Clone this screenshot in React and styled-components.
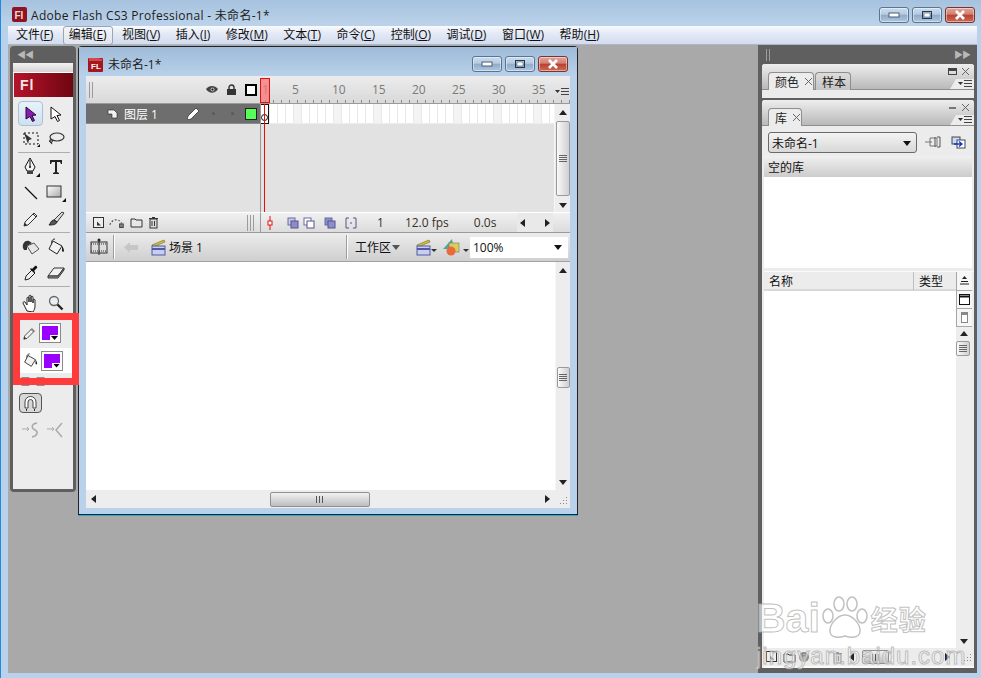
import React from "react";
import styled, { createGlobalStyle } from "styled-components";

const GlobalStyle = createGlobalStyle`
  html, body {
    margin: 0;
    padding: 0;
    width: 981px;
    height: 678px;
    overflow: hidden;
    background: #b9d1ea;
  }
  * { box-sizing: border-box; }
`;

const UI = `"Open Sans", "Noto Sans CJK SC", sans-serif`;

const AppFrame = styled.div`
  width: 981px;
  height: 678px;
  display: flex;
  flex-direction: column;
  background: #b9d1ea;
  border-left: 1px solid #1f8ae6;
  font-family: ${UI};
  font-size: 12px;
  color: #111;
  overflow: hidden;
`;

const TitleBar = styled.div`
  height: 26px;
  flex: none;
  display: flex;
  align-items: center;
  padding: 3px 6px 0 11px;
  background: linear-gradient(#a6c2de, #bcd3ea);
`;

const TitleText = styled.span`
  margin-left: 4px;
  font-size: 12px;
  letter-spacing: 0.3px;
  color: #1c1c1c;
  white-space: nowrap;
`;

const WinButtons = styled.div`
  margin-left: auto;
  display: flex;
  gap: 3px;
`;

const WinButton = styled.div`
  width: 30px;
  height: 16px;
  border: 1px solid ${(p) => (p.$close ? "#7c342a" : "#5a7590")};
  border-radius: 3px;
  display: flex;
  align-items: center;
  justify-content: center;
  box-shadow: inset 0 0 0 1px rgba(255, 255, 255, 0.45);
  background: ${(p) =>
    p.$close
      ? "linear-gradient(#e2a49b 0%, #d27f72 45%, #b8412f 50%, #cf6a58 100%)"
      : "linear-gradient(#ccdcee 0%, #b5cbe2 45%, #8eabca 50%, #afc7e0 100%)"};
`;

const MenuBar = styled.div`
  height: 19px;
  flex: none;
  display: flex;
  align-items: center;
  gap: 3.5px;
  margin: 0 4px 0 7px;
  padding-left: 2px;
  background: linear-gradient(#f8fafd 0%, #e4eaf6 40%, #d3dcee 100%);
  border-bottom: 1px solid #a9b7c9;
`;

const MenuItem = styled.div`
  height: 19px;
  line-height: 16px;
  padding: 0 5px;
  white-space: nowrap;
  font-size: 12px;
  border: 1px solid ${(p) => (p.$active ? "#9aa6b4" : "transparent")};
  border-radius: 3px;
  background: ${(p) => (p.$active ? "linear-gradient(#f4f6fa, #dfe4ee)" : "none")};

  u {
    text-underline-offset: 1px;
  }
`;

const Workspace = styled.div`
  flex: 1;
  min-height: 0;
  margin: 0 4px 5px 7px;
  padding: 1px 0 0 2px;
  background: #a9a9a9;
  display: flex;
  align-items: flex-start;
`;

/* tools */

const ToolPanel = styled.div`
  position: relative;
  width: 66px;
  height: 446px;
  flex: none;
  padding: 0 3px 3px;
  background: #5f5f5f;
  border-radius: 4px;
  display: flex;
  flex-direction: column;
`;

const PanelStrip = styled.div`
  height: ${(p) => p.$h || 17}px;
  flex: none;
  display: flex;
  align-items: center;
  justify-content: ${(p) => p.$justify || "flex-start"};
  color: #b8b8b8;
  font-size: 9px;
  letter-spacing: -1px;
  padding: 0 4px;
`;

const ToolBody = styled.div`
  flex: 1;
  background: #ececec;
  display: flex;
  flex-direction: column;
`;

const ToolHead = styled.div`
  height: 10px;
  flex: none;
  background: linear-gradient(#f2f2f2, #d4d4d4);
  border-bottom: 1px solid #fff;
`;

const FlBand = styled.div`
  height: 24px;
  flex: none;
  margin-left: 1px;
  padding-left: 6px;
  display: flex;
  align-items: center;
  color: #f4e3e3;
  font: bold 14px "Liberation Sans", sans-serif;
  letter-spacing: 1px;
  background: linear-gradient(90deg, #b5142b, #6f0610);
`;

const ToolRow = styled.div`
  height: ${(p) => p.$h || 26}px;
  margin-top: ${(p) => p.$top || 0}px;
  flex: none;
  display: grid;
  grid-template-columns: 25px 25px;
  padding-left: 5px;
`;

const ToolCell = styled.div`
  display: flex;
  align-items: center;
  justify-content: center;
  border-radius: 4px;
  ${(p) =>
    p.$active &&
    `
    border: 1px solid #a9c1d6;
    background: linear-gradient(#e9f2fa, #cfe0ef);
  `}
`;

const ToolDivider = styled.div`
  height: 1px;
  flex: none;
  margin: 0 3px 0 5px;
  background: #aeaeae;
`;

const ColorRow = styled.div`
  height: ${(p) => p.$h}px;
  margin-top: ${(p) => p.$top || 0}px;
  flex: none;
  display: flex;
  align-items: center;
  padding-left: 10px;
  gap: 4px;
  background: ${(p) => (p.$white ? "#fff" : "transparent")};
`;

const Swatch = styled.div`
  position: relative;
  width: 20px;
  height: 18px;
  background: #9900ff;
  border: 2px solid #fff;
  outline: 1px solid #8a8a8a;

  &::before {
    content: "";
    position: absolute;
    right: -1px;
    bottom: -1px;
    width: 9px;
    height: 6px;
    background: #fff;
  }

  &::after {
    content: "";
    position: absolute;
    right: 0;
    bottom: 0;
    width: 7px;
    height: 4px;
    background: #000;
    clip-path: polygon(0 0, 100% 0, 50% 100%);
  }
`;

const MagnetBox = styled.div`
  width: 23px;
  height: 20px;
  border: 1px solid #555;
  border-radius: 4px;
  background: #d8d8d8;
  display: flex;
  align-items: center;
  justify-content: center;
`;

const Highlight = styled.div`
  position: absolute;
  left: 3px;
  top: 267px;
  width: 66px;
  height: 72px;
  border: 7px solid #ff3b3b;
  z-index: 5;
`;

/* document window */

const DocWindow = styled.div`
  width: 500px;
  height: 469px;
  flex: none;
  margin-left: 2px;
  padding: 0 7px 6px;
  background: #b9d1ea;
  border: 1px solid #222;
  border-bottom-color: #0a2a3a;
  border-radius: 4px 4px 0 0;
  box-shadow: 0 1px 0 #27a7c9;
  display: flex;
  flex-direction: column;
`;

const DocTitle = styled.div`
  height: 29px;
  flex: none;
  display: flex;
  align-items: center;
  margin: 0 -7px;
  padding: 5px 9px 0 9px;
  background: linear-gradient(#9fbbd8, #b9d1ea);
  font-size: 12px;
  color: #1c1c1c;
`;

const DocTitleText = styled.span`
  margin-left: 4px;
`;

const Timeline = styled.div`
  height: 156px;
  flex: none;
  display: grid;
  grid-template-columns: 175px 1fr 16px;
  grid-template-rows: 28px 108px 20px;
  background: #e2e2e2;
`;

const RulerHead = styled.div`
  display: flex;
  align-items: center;
  padding: 0 4px 0 3px;
  background: linear-gradient(#ececec, #d9d9d9);
  border-bottom: 1px solid #9a9a9a;
`;

const Grip = styled.div`
  width: ${(p) => p.$w || 4}px;
  height: ${(p) => p.$h || 16}px;
  flex: none;
  margin-left: ${(p) => p.$left || 0}px;
  background: repeating-linear-gradient(90deg, #9c9c9c 0 1px, transparent 1px 3px);
`;

const HeadIcons = styled.div`
  margin-left: auto;
  display: flex;
  align-items: center;
  gap: 7px;
`;

const OutlineBox = styled.div`
  width: 12px;
  height: 12px;
  border: 2px solid #000;
  background: #fff;
  margin-left: 1px;
`;

const Ruler = styled.div`
  position: relative;
  grid-column: 2 / 4;
  display: flex;
  align-items: flex-start;
  padding: 5px 0 0 1px;
  color: #7a7a7a;
  font-size: 12px;
  line-height: 18px;
  border-bottom: 1px solid #9a9a9a;
  background:
    repeating-linear-gradient(90deg, #8e8e8e 0 1px, transparent 1px 8px) 4px 100% / 100% 3px no-repeat,
    linear-gradient(#ececec, #d9d9d9);
`;

const RulerNum = styled.span`
  flex: none;
  width: ${(p) => p.$w || 40}px;
`;

const PlayHead = styled.div`
  position: absolute;
  left: -1px;
  top: 2px;
  width: 10px;
  height: 25px;
  background: rgba(255, 110, 110, 0.7);
  border: 1px solid #e01010;
  z-index: 2;
`;

const RulerMenu = styled.div`
  position: absolute;
  right: 1px;
  top: 7px;
`;

const LayerColumn = styled.div`
  border-right: 1px solid #9a9a9a;
`;

const LayerRow = styled.div`
  height: 20px;
  display: flex;
  align-items: center;
  padding: 0 3px 0 21px;
  background: #6e6e6e;
  color: #fff;
  font-size: 12px;
  border-bottom: 1px solid #8c8c8c;
`;

const LayerName = styled.span`
  margin-left: 6px;
  width: 63px;
  flex: none;
`;

const LayerDot = styled.span`
  width: 3px;
  height: 3px;
  flex: none;
  border-radius: 50%;
  background: #5a5a5a;
  margin-left: ${(p) => p.$left}px;
`;

const LayerColor = styled.span`
  width: 12px;
  height: 12px;
  flex: none;
  margin-left: auto;
  background: #55ff55;
  border: 1px solid #222;
`;

const FrameColumn = styled.div`
  position: relative;
`;

const FrameRow = styled.div`
  position: relative;
  height: 20px;
  background:
    repeating-linear-gradient(90deg, #e8e8e8 0 1px, transparent 1px 8px),
    repeating-linear-gradient(90deg, transparent 0 32px, #f4f4f4 32px 40px),
    #fff;
  border-bottom: 1px solid #ececec;
`;

const KeyFrame = styled.div`
  position: absolute;
  left: 0;
  top: 0;
  width: 8px;
  height: 20px;
  border: 1px solid #111;
  border-left: 0;
  background: #fff;

  &::after {
    content: "";
    position: absolute;
    left: 0;
    bottom: 2px;
    width: 5px;
    height: 5px;
    border: 1px solid #111;
    border-radius: 50%;
  }
`;

const PlayLine = styled.div`
  position: absolute;
  left: 3px;
  top: 0;
  width: 1px;
  height: 108px;
  background: #e01010;
  z-index: 1;
`;

const VScroll = styled.div`
  width: ${(p) => p.$w || 16}px;
  display: flex;
  flex-direction: column;
  align-items: center;
  background: #ededed;
  border-left: 1px solid #f6f6f6;
`;

const ArrowCell = styled.div`
  height: ${(p) => p.$h || 17}px;
  flex: none;
  display: flex;
  align-items: center;
  justify-content: center;
  width: 100%;
`;

const Thumb = styled.div`
  width: ${(p) => p.$w || 14}px;
  height: ${(p) => p.$h}px;
  flex: none;
  margin-top: ${(p) => p.$top || 0}px;
  border: 1px solid #9a9a9a;
  border-radius: 2px;
  background: linear-gradient(90deg, #fafafa, #cfcfcf);
  display: flex;
  align-items: center;
  justify-content: center;
`;

const ThumbLinesH = styled.div`
  width: 8px;
  height: 7px;
  background: repeating-linear-gradient(#666 0 1px, transparent 1px 2px);
`;

const ThumbLinesV = styled.div`
  width: 8px;
  height: 7px;
  background: repeating-linear-gradient(90deg, #555 0 1px, transparent 1px 3px);
`;

const Spacer = styled.div`
  flex: 1;
`;

const FootLeft = styled.div`
  display: flex;
  align-items: center;
  padding: 0 0 0 7px;
  border-top: 1px solid #fff;
  border-right: 1px solid #9a9a9a;
  background: linear-gradient(#f0f0f0, #dcdcdc);
  gap: 5px;
`;

const FootRight = styled.div`
  grid-column: 2 / 4;
  display: flex;
  align-items: center;
  border-top: 1px solid #fff;
  background: linear-gradient(#f0f0f0, #dcdcdc);
  color: #333;
  font-size: 12px;
  padding-left: 5px;
`;

const OnionGroup = styled.div`
  display: flex;
  align-items: center;
  margin-left: 13px;
`;

const FootText = styled.span`
  margin-left: ${(p) => p.$left}px;
  color: #3a3024;
  white-space: nowrap;
`;

const FootArrows = styled.div`
  margin: 0 17px 0 auto;
  width: 36px;
  height: 100%;
  padding: 0 2px;
  display: flex;
  align-items: center;
  justify-content: space-between;
  background: #e9e9e9;
`;

const EditBar = styled.div`
  height: 30px;
  flex: none;
  display: flex;
  align-items: center;
  padding-left: 4px;
  border-top: 1px solid #9a9a9a;
  border-bottom: 1px solid #a2a2a2;
  background: linear-gradient(#ececec, #cfcfcf);
  font-size: 12px;
  white-space: nowrap;
`;

const EditSep = styled.div`
  width: 1px;
  height: 24px;
  flex: none;
  margin: 0 ${(p) => p.$right || 0}px 0 ${(p) => p.$left || 0}px;
  background: #9c9c9c;
  box-shadow: 1px 0 0 #fff;
`;

const SceneLabel = styled.span`
  margin-left: 3px;
  flex: none;
`;

const WorkLabel = styled.span`
  flex: none;
`;

const Dropdown = styled.div`
  display: flex;
  flex: none;
  align-items: center;
  justify-content: space-between;
  padding: 0 6px 0 3px;
  height: 21px;
  width: ${(p) => p.$w}px;
  background: #fff;
  margin-left: ${(p) => p.$left || 0}px;
  font-size: 12px;
`;

const StageArea = styled.div`
  flex: 1;
  min-height: 0;
  display: grid;
  grid-template-columns: 1fr 15px;
  grid-template-rows: 1fr 18px;
  background: #fff;
`;

const Stage = styled.div`
  background: #fff;
`;

const HScroll = styled.div`
  display: flex;
  align-items: center;
  padding: 0 4px;
  background: #ededed;
  height: 100%;
`;

const HThumb = styled.div`
  width: ${(p) => p.$w}px;
  height: ${(p) => p.$h || 15}px;
  flex: none;
  margin-left: ${(p) => p.$left}px;
  border: 1px solid #8f8f8f;
  border-radius: 2px;
  background: linear-gradient(#f2f2f2, #bdbdbd);
  display: flex;
  align-items: center;
  justify-content: center;
`;

const CornerGrip = styled.div`
  background: #ededed;
  display: flex;
  align-items: flex-end;
  justify-content: flex-end;
  padding: 0 2px 3px 0;
`;

/* right panel */

const SidePanel = styled.div`
  position: relative;
  width: 219px;
  height: 628px;
  flex: none;
  margin-left: auto;
  margin-top: -1px;
  background: #5f5f5f;
  padding: 0 3px 5px 4px;
  display: flex;
  flex-direction: column;
`;

const PanelBox = styled.div`
  flex: ${(p) => (p.$grow ? 1 : "none")};
  min-height: 0;
  margin-top: ${(p) => p.$top || 0}px;
  height: ${(p) => (p.$grow ? "auto" : "34px")};
  background: #ececec;
  border-radius: 3px 3px 0 0;
  display: flex;
  flex-direction: column;
`;

const TabBand = styled.div`
  position: relative;
  height: 26px;
  flex: none;
  display: flex;
  align-items: flex-end;
  padding-left: 6px;
  background: linear-gradient(#eeeeee, #b9b9b9);
  border-bottom: 1px solid #8e8e8e;
  border-radius: 3px 3px 0 0;
`;

const Tab = styled.div`
  height: 18px;
  width: ${(p) => p.$w}px;
  margin-right: 1px;
  margin-bottom: -1px;
  display: flex;
  align-items: center;
  gap: 5px;
  padding-left: 6px;
  font-size: 12px;
  border: 1px solid #8e8e8e;
  border-bottom: 0;
  border-radius: 4px 4px 0 0;
  background: ${(p) => (p.$active ? "#ececec" : "linear-gradient(#dcdcdc, #c4c4c4)")};
  color: #222;
`;

const PanelActions = styled.div`
  position: absolute;
  right: 4px;
  top: 3px;
  display: flex;
  align-items: center;
  gap: 4px;
`;

const PanelMenu = styled.div`
  position: absolute;
  right: 0;
  bottom: 0;
  width: 24px;
  height: 10px;
  display: flex;
  align-items: center;
  justify-content: flex-end;
  padding-right: 2px;
  background: #ececec;
  clip-path: polygon(25% 0, 100% 0, 100% 100%, 0 100%);
`;

const LibraryRow = styled.div`
  height: 21px;
  flex: none;
  margin: 6px 0 0 6px;
  display: flex;
  align-items: center;
`;

const LibrarySelect = styled.div`
  width: 149px;
  height: 21px;
  display: flex;
  align-items: center;
  justify-content: space-between;
  padding: 0 5px 0 3px;
  border: 1px solid #6a6a6a;
  border-radius: 3px;
  font-size: 12px;
  background: linear-gradient(#f4f4f4, #d8d8d8);
`;

const RowIcon = styled.div`
  margin-left: ${(p) => p.$left}px;
  display: flex;
  flex: none;
`;

const PreviewTitle = styled.div`
  height: 21px;
  flex: none;
  margin: 3px 2px 0 2px;
  padding-left: 4px;
  display: flex;
  align-items: center;
  font-size: 12px;
  background: linear-gradient(#f0f0f0, #cccccc);
`;

const PreviewArea = styled.div`
  height: 91px;
  flex: none;
  margin: 0 2px;
  background: #fff;
`;

const ListHead = styled.div`
  height: 20px;
  flex: none;
  margin: 3px 0 0 2px;
  display: flex;
  align-items: center;
  font-size: 12px;
  border-top: 1px solid #fafafa;
`;

const ColName = styled.div`
  width: 149px;
  padding-left: 5px;
  flex: none;
  height: 100%;
  display: flex;
  align-items: center;
  background: #ececec;
  border-bottom: 2px solid #d8d8d8;
`;

const ColType = styled.div`
  width: 43px;
  flex: none;
  height: 100%;
  padding-left: 5px;
  display: flex;
  align-items: center;
  background: #ececec;
  border-left: 1px solid #c0c0c0;
  border-bottom: 2px solid #d8d8d8;
`;

const ListBody = styled.div`
  flex: 1;
  min-height: 0;
  margin-left: 2px;
  display: grid;
  grid-template-columns: 192px 16px;
`;

const ListArea = styled.div`
  background: #fff;
`;

const SideColumn = styled.div`
  display: flex;
  flex-direction: column;
  background: #ededed;
`;

const SideButton = styled.div`
  width: 16px;
  height: ${(p) => p.$h || 18}px;
  flex: none;
  display: flex;
  align-items: center;
  justify-content: center;
  background: #f6f6f6;
  border: 1px solid #a8a8a8;
  border-width: 0 0 1px 1px;
`;

const ListFoot = styled.div`
  height: 20px;
  flex: none;
  margin-left: 2px;
  display: flex;
  align-items: center;
  padding-left: 2px;
  background: #ececec;
  border-bottom: 2px solid #fafafa;
`;

const Watermark = styled.div`
  position: absolute;
  left: -2px;
  top: 549px;
  width: 190px;
  z-index: 4;
  pointer-events: none;
  color: rgba(255, 255, 255, 0.6);
  -webkit-text-stroke: 1px rgba(165, 165, 165, 0.7);
`;

const WmLine = styled.div`
  display: flex;
  align-items: center;
  height: ${(p) => p.$h}px;
  white-space: nowrap;
`;

const WmBai = styled.span`
  font: bold 41px "Liberation Sans", sans-serif;
`;

const WmCn = styled.span`
  margin: 0 0 0 1px;
  font: bold 27px "Noto Sans CJK SC", sans-serif;
  letter-spacing: 1px;
`;

const WmUrl = styled.span`
  font: 24px "Liberation Sans", sans-serif;
  letter-spacing: 1px;
`;

/* icons */

const Tri = ({ dir = "down", size = 8, color = "#222" }) => {
  const pts = {
    down: "0,2 8,2 4,7",
    up: "0,6 8,6 4,1",
    left: "6,0 6,8 1,4",
    right: "2,0 2,8 7,4",
  };
  return (
    <svg width={size} height={size} viewBox="0 0 8 8">
      <polygon points={pts[dir]} fill={color} />
    </svg>
  );
};

const FlDoc = () => (
  <svg width="16" height="17" viewBox="0 0 16 17">
    <rect x="0" y="2" width="15" height="14" rx="1" fill="#a5161f" />
    <path d="M1 2h9l4 1v2H1z" fill="#cf4a4a" />
    <text x="3" y="13" fontSize="8" fontWeight="700" fontFamily="Liberation Sans" fill="#fff">
      FL
    </text>
  </svg>
);

const FlSquare = () => (
  <svg width="15" height="15" viewBox="0 0 15 15">
    <rect width="15" height="15" rx="2" fill="#8d1420" />
    <text x="2.5" y="12" fontSize="10" fontWeight="700" fontFamily="Liberation Sans" fill="#f3dada">
      Fl
    </text>
  </svg>
);

const Minimize = () => (
  <svg width="12" height="6" viewBox="0 0 12 6">
    <rect x="1" y="1" width="10" height="4" fill="#fff" stroke="#4c5f74" />
  </svg>
);

const Maximize = () => (
  <svg width="12" height="10" viewBox="0 0 12 10">
    <rect x="1.5" y="1.5" width="9" height="7" fill="none" stroke="#26384c" strokeWidth="1" />
    <rect x="3" y="3" width="6" height="4" fill="#fff" stroke="#26384c" strokeWidth="0.5" />
  </svg>
);

const CloseX = () => (
  <svg width="14" height="10" viewBox="0 0 14 10">
    <path d="M3 1l8 8M11 1l-8 8" stroke="#fff" strokeWidth="2.6" />
  </svg>
);

const ArrowTool = ({ fill = "#8a1bb0", stroke = "#2a0a3a" }) => (
  <svg width="14" height="16" viewBox="0 0 14 16">
    <path d="M2 1l10 8-4 .5 2.5 5-2 1-2.5-5L2 13z" fill={fill} stroke={stroke} strokeWidth="1" />
  </svg>
);

const FreeTransform = () => (
  <svg width="18" height="16" viewBox="0 0 18 16">
    <rect x="2" y="2" width="14" height="11" fill="none" stroke="#111" strokeDasharray="2 2" />
    <path d="M2 2l8 6-3 1-1 4z" fill="#333" />
    <path d="M13 15h3v-3z" fill="#111" transform="translate(2 1)" />
  </svg>
);

const Lasso = () => (
  <svg width="18" height="16" viewBox="0 0 18 16">
    <ellipse cx="10" cy="6" rx="7" ry="4" fill="none" stroke="#333" strokeWidth="1.2" />
    <path d="M4 9c-1 2 0 3 1 4" fill="none" stroke="#333" strokeWidth="1.2" />
    <circle cx="4" cy="10" r="1.5" fill="none" stroke="#333" />
  </svg>
);

const PenTool = () => (
  <svg width="18" height="20" viewBox="0 0 18 20">
    <path d="M8 1L3 10l2 4h6l2-4z" fill="#f4f4f4" stroke="#111" />
    <path d="M8 3v7" stroke="#111" />
    <circle cx="8" cy="10" r="1" fill="#111" />
    <rect x="5" y="14" width="6" height="3" fill="#444" />
    <path d="M18 20h-4l4-4z" fill="#111" />
  </svg>
);

const TextTool = () => (
  <svg width="14" height="16" viewBox="0 0 14 16">
    <path d="M1 1h12v4h-1l-1-2H8v10l2 1v1H4v-1l2-1V3H3L2 5H1z" fill="#222" />
  </svg>
);

const LineTool = () => (
  <svg width="16" height="16" viewBox="0 0 16 16">
    <path d="M2 2l12 12" stroke="#111" strokeWidth="1.2" />
  </svg>
);

const RectTool = () => (
  <svg width="20" height="17" viewBox="0 0 20 17">
    <defs>
      <linearGradient id="rectfill" x1="0" y1="0" x2="1" y2="1">
        <stop offset="0" stopColor="#fff" />
        <stop offset="1" stopColor="#aaa" />
      </linearGradient>
    </defs>
    <rect x="1" y="1" width="14" height="11" fill="url(#rectfill)" stroke="#333" />
    <path d="M20 17h-4l4-4z" fill="#111" />
  </svg>
);

const Pencil = ({ size = 16 }) => (
  <svg width={size} height={size} viewBox="0 0 16 16">
    <path d="M2 11L11 2l3 3-9 9-4 1z" fill="#f2f2f2" stroke="#333" />
    <path d="M10 3l3 3" stroke="#333" />
    <path d="M1 15l1-3 2 2z" fill="#222" />
  </svg>
);

const Brush = () => (
  <svg width="18" height="16" viewBox="0 0 18 16">
    <path d="M7 9l8-8 2 1-7 9z" fill="#ddd" stroke="#333" />
    <path d="M7 9c-3 0-3 3-5 5 3 0 7 0 8-3z" fill="#555" stroke="#222" />
  </svg>
);

const InkBottle = () => (
  <svg width="18" height="16" viewBox="0 0 18 16">
    <path d="M1 9c-1-4 2-8 6-7l3 2-5 3v4H2z" fill="#333" />
    <path d="M5 7l7-3 5 6-7 5z" fill="#e6e6e6" stroke="#555" />
  </svg>
);

const Bucket = ({ size = 18 }) => (
  <svg width={size} height={size} viewBox="0 0 18 18">
    <path d="M8 1c-3 0-4 3-3 5" fill="none" stroke="#222" />
    <path d="M6 3l9 5-5 8-8-5z" fill="#f2f2f2" stroke="#222" />
    <path d="M15 8c1 1 2 3 2 5 0 1-2 1-2 0z" fill="#222" />
  </svg>
);

const Dropper = () => (
  <svg width="16" height="18" viewBox="0 0 16 18">
    <path d="M2 16l1-4 6-6 3 3-6 6z" fill="#eee" stroke="#222" />
    <path d="M9 5l3-3c1-1 3 1 2 2l-3 3 1 1-1 1-4-4 1-1z" fill="#111" />
  </svg>
);

const Eraser = () => (
  <svg width="18" height="14" viewBox="0 0 18 14">
    <path d="M1 10l6-8h10l-6 8z" fill="#f2f2f2" stroke="#333" />
    <path d="M1 10v2h10l6-8V2l-6 8z" fill="#999" stroke="#333" />
  </svg>
);

const Hand = () => (
  <svg width="18" height="18" viewBox="0 0 18 18">
    <path
      d="M5 17L1 9c0-1 1-2 2-1l2 3V4c0-1 2-1 2 0v4-6c0-1 2-1 2 0v6-5c0-1 2-1 2 0v6-3c0-1 2-1 2 0v6c0 3-1 4-2 6z"
      fill="#fff"
      stroke="#222"
    />
  </svg>
);

const Zoomer = () => (
  <svg width="16" height="16" viewBox="0 0 16 16">
    <circle cx="6" cy="6" r="4.5" fill="#e8eef2" stroke="#666" strokeWidth="1.3" />
    <path d="M9.5 9.5l5 5" stroke="#222" strokeWidth="2.4" />
  </svg>
);

const SwapIcons = () => (
  <svg width="40" height="12" viewBox="0 0 40 12">
    <rect x="4" y="4" width="7" height="7" fill="#fff" stroke="#333" />
    <rect x="19" y="4" width="7" height="7" fill="#fff" stroke="#333" />
    <path d="M27 6l4 0-2 5z" fill="#222" />
  </svg>
);

const Magnet = () => (
  <svg width="15" height="17" viewBox="0 0 15 17">
    <path d="M2 13V7a5.5 5.5 0 0 1 11 0v6h-3V7a2.5 2.5 0 0 0-5 0v6z" fill="#fff" stroke="#444" />
    <path d="M3 15h1M11 15h1" stroke="#333" strokeWidth="2" />
  </svg>
);

const SmoothIcon = () => (
  <svg width="18" height="16" viewBox="0 0 18 16">
    <path d="M0 7h7" stroke="#aaa" />
    <path d="M5 5l2 2-2 2" fill="none" stroke="#aaa" />
    <path d="M15 1c-6 1-6 5-2 7s2 6-3 7" fill="none" stroke="#aaa" strokeWidth="1.5" />
  </svg>
);

const StraightenIcon = () => (
  <svg width="18" height="16" viewBox="0 0 18 16">
    <path d="M0 7h7" stroke="#aaa" />
    <path d="M5 5l2 2-2 2" fill="none" stroke="#aaa" />
    <path d="M15 1l-6 7 6 7" fill="none" stroke="#aaa" strokeWidth="1.5" />
  </svg>
);

const Eye = () => (
  <svg width="13" height="10" viewBox="0 0 13 10">
    <path d="M0 4c3-4 9-4 12 0-3 5-9 5-12 0z" fill="#444" />
    <circle cx="6.5" cy="4.5" r="2" fill="#bbb" />
    <circle cx="6.5" cy="4.5" r="1" fill="#111" />
  </svg>
);

const Lock = () => (
  <svg width="11" height="12" viewBox="0 0 11 12">
    <path d="M3 5V3.5a2.5 2.5 0 0 1 5 0V5" fill="none" stroke="#333" strokeWidth="1.4" />
    <rect x="1" y="5" width="9" height="6" fill="#333" />
  </svg>
);

const LayerPage = () => (
  <svg width="11" height="10" viewBox="0 0 11 10">
    <path d="M1 1h6l3 3v5H5V5H1z" fill="#f2f2f2" stroke="#222" strokeWidth="0.6" />
  </svg>
);

const PencilWhite = () => (
  <svg width="13" height="13" viewBox="0 0 13 13">
    <path d="M1 9l8-8 3 3-8 8-4 1z" fill="#fff" stroke="#222" strokeWidth="0.7" />
  </svg>
);

const MenuLines = () => (
  <svg width="14" height="8" viewBox="0 0 14 8">
    <polygon points="0,2 5,2 2.5,5" fill="#333" />
    <path d="M6 .5h8M6 3.5h8M6 6.5h8" stroke="#444" />
  </svg>
);

const NewLayer = () => (
  <svg width="11" height="12" viewBox="0 0 11 12">
    <rect x=".5" y=".5" width="10" height="10" fill="#eee" stroke="#333" />
    <path d="M4 8.500v-4l4 4z" fill="#333" />
  </svg>
);

const MotionGuide = () => (
  <svg width="16" height="12" viewBox="0 0 18 12">
    <path d="M1 8c2-6 9-8 13-2" fill="none" stroke="#555" strokeDasharray="2 2" strokeWidth="1.4" />
    <rect x="12" y="7" width="4" height="4" fill="#888" stroke="#333" />
  </svg>
);

const Folder = () => (
  <svg width="13" height="11" viewBox="0 0 13 11">
    <path d="M1 2h4l1 1h6v7H1z" fill="#e8e8e8" stroke="#333" />
  </svg>
);

const InfoDot = () => (
  <svg width="10" height="10" viewBox="0 0 10 10">
    <circle cx="5" cy="5" r="5" fill="#8a8a8a" />
    <path d="M5 2v1M5 4.500V8" stroke="#eee" />
  </svg>
);

const Trash = ({ color = "#333" }) => (
  <svg width="11" height="13" viewBox="0 0 11 13">
    <rect x="2" y="3" width="7" height="9" fill="#ddd" stroke={color} />
    <path d="M1 2.500h9M4 1.500h3M4 5v5M6.500 5v5" stroke={color} />
  </svg>
);

const OnionMark = () => (
  <svg width="8" height="14" viewBox="0 0 8 14">
    <path d="M4 0v14" stroke="#e01010" />
    <rect x="2" y="5" width="4" height="4" fill="#fff" stroke="#e01010" />
  </svg>
);

const Onion = ({ back = "#c9c9e8", front = "#8d8dc8" }) => (
  <svg width="12" height="12" viewBox="0 0 12 12">
    <rect x="1" y="1" width="7" height="7" fill={back} stroke="#6a6aa8" />
    <rect x="4" y="4" width="7" height="7" fill={front} stroke="#55558f" />
  </svg>
);

const FrameBrackets = () => (
  <svg width="12" height="12" viewBox="0 0 12 12">
    <path d="M4 1H1v10h3M8 1h3v10H8" fill="none" stroke="#55558f" />
    <path d="M5 6h2" stroke="#55558f" />
  </svg>
);

const FilmTimeline = () => (
  <svg width="18" height="18" viewBox="0 0 18 18">
    <rect x="1" y="4" width="16" height="11" fill="#ddd" stroke="#333" />
    <path d="M1 6h16M1 13h16" stroke="#333" strokeDasharray="1 1" />
    <path d="M9 2v15" stroke="#222" />
    <circle cx="9" cy="2" r="1.500" fill="#222" />
  </svg>
);

const BackArrow = () => (
  <svg width="15" height="11" viewBox="0 0 15 11">
    <path d="M0 5.500L6 0v3h8v5H6v3z" fill="#c6c6c6" />
  </svg>
);

const Clapper = () => (
  <svg width="15" height="17" viewBox="0 0 15 17">
    <path d="M1 6l12-5 1 2-12 5z" fill="#d5c23c" stroke="#6d6420" strokeWidth="0.6" />
    <rect x="1" y="7" width="13" height="9" fill="#c9cdf0" stroke="#4f5aa0" />
    <path d="M1 10h13" stroke="#4f5aa0" strokeWidth="2" />
  </svg>
);

const SymbolShapes = () => (
  <svg width="20" height="19" viewBox="0 0 20 19">
    <polygon points="0,11 9,1 11,11" fill="#4ea89a" />
    <rect x="6" y="5" width="10" height="9" fill="#d8cf5a" stroke="#777" strokeWidth="0.6" />
    <circle cx="8" cy="13" r="4.500" fill="#ea6a3a" />
  </svg>
);

const SmallTri = () => (
  <svg width="6" height="12" viewBox="0 0 6 12">
    <polygon points="0,8 6,8 3,11" fill="#333" />
  </svg>
);

const PinIcon = () => (
  <svg width="16" height="13" viewBox="0 0 16 13">
    <path d="M0 6h7M5 2h7v8H5z" fill="none" stroke="#777" />
    <path d="M10 1v10M12 1h3v10h-3" fill="none" stroke="#555" />
  </svg>
);

const NewLibrary = () => (
  <svg width="15" height="13" viewBox="0 0 15 13">
    <rect x="1" y="1" width="8" height="7" fill="#c8dbf4" stroke="#445" />
    <rect x="6" y="4" width="8" height="8" fill="#fff" stroke="#445" />
    <path d="M3 8h7M8 5.500L11 8l-3 2.500" fill="none" stroke="#1535c0" strokeWidth="1.300" />
  </svg>
);

const SortIcon = () => (
  <svg width="9" height="10" viewBox="0 0 9 10">
    <polygon points="4.500,0 7,3 2,3" fill="#222" />
    <path d="M1 5.500h7M0 8h9" stroke="#222" />
  </svg>
);

const WideBox = () => (
  <svg width="11" height="11" viewBox="0 0 11 11">
    <rect x=".5" y=".5" width="10" height="10" fill="#fff" stroke="#111" />
    <path d="M1 2.500h9" stroke="#111" strokeWidth="2" />
  </svg>
);

const NarrowBox = () => (
  <svg width="7" height="11" viewBox="0 0 7 11">
    <rect x=".5" y=".5" width="6" height="10" fill="#fff" stroke="#888" />
    <path d="M1 2h5" stroke="#888" strokeWidth="2" />
  </svg>
);

const MiniMin = () => (
  <svg width="9" height="7" viewBox="0 0 9 7">
    <rect x=".5" y=".5" width="8" height="6" fill="none" stroke="#444" />
    <path d="M1 2h7" stroke="#444" strokeWidth="2" />
  </svg>
);

const MiniDash = () => (
  <svg width="9" height="7" viewBox="0 0 9 7">
    <path d="M1 4h7" stroke="#555" strokeWidth="1.500" />
  </svg>
);

const MiniX = () => (
  <svg width="9" height="9" viewBox="0 0 9 9">
    <path d="M1 1l7 7M8 1L1 8" stroke="#666" />
  </svg>
);

const ResizeDots = () => (
  <svg width="9" height="9" viewBox="0 0 9 9">
    <path d="M7 1h1v1H7zM4 4h1v1H4zM7 4h1v1H7zM1 7h1v1H1zM4 7h1v1H4zM7 7h1v1H7z" fill="#888" />
  </svg>
);

const PawMark = () => (
  <svg width="50" height="48" viewBox="0 0 50 44">
    <g fill="rgba(255,255,255,0.6)" stroke="rgba(165,165,165,0.7)" strokeWidth="1.500">
      <ellipse cx="8" cy="20" rx="5" ry="7" />
      <ellipse cx="19" cy="8" rx="5" ry="7" />
      <ellipse cx="32" cy="8" rx="5" ry="7" />
      <ellipse cx="42" cy="20" rx="5" ry="7" />
      <path d="M25 19c8 0 16 10 15 17-1 6-9 6-15 4-6 2-14 2-15-4-1-7 7-17 15-17z" />
    </g>
  </svg>
);

const MENU = [
  ["文件", "F"],
  ["编辑", "E", true],
  ["视图", "V"],
  ["插入", "I"],
  ["修改", "M"],
  ["文本", "T"],
  ["命令", "C"],
  ["控制", "O"],
  ["调试", "D"],
  ["窗口", "W"],
  ["帮助", "H"],
];

const RULER_MARKS = [5, 10, 15, 20, 25, 30, 35];

const App = () => {
  return (
    <>
      <GlobalStyle />
      <AppFrame>
        <TitleBar>
          <FlSquare />
          <TitleText>Adobe Flash CS3 Professional - 未命名-1*</TitleText>
          <WinButtons>
            <WinButton>
              <Minimize />
            </WinButton>
            <WinButton>
              <Maximize />
            </WinButton>
            <WinButton $close>
              <CloseX />
            </WinButton>
          </WinButtons>
        </TitleBar>

        <MenuBar>
          {MENU.map(([label, key, active]) => (
            <MenuItem key={key} $active={active}>
              {label}(<u>{key}</u>)
            </MenuItem>
          ))}
        </MenuBar>

        <Workspace>
          <ToolPanel>
            <PanelStrip>◀◀</PanelStrip>
            <ToolBody>
              <ToolHead />
              <FlBand>Fl</FlBand>
              <ToolRow $top={4} $h={25}>
                <ToolCell $active>
                  <ArrowTool />
                </ToolCell>
                <ToolCell>
                  <ArrowTool fill="#fff" stroke="#111" />
                </ToolCell>
              </ToolRow>
              <ToolRow>
                <ToolCell>
                  <FreeTransform />
                </ToolCell>
                <ToolCell>
                  <Lasso />
                </ToolCell>
              </ToolRow>
              <ToolDivider />
              <ToolRow $top={1}>
                <ToolCell>
                  <PenTool />
                </ToolCell>
                <ToolCell>
                  <TextTool />
                </ToolCell>
              </ToolRow>
              <ToolRow>
                <ToolCell>
                  <LineTool />
                </ToolCell>
                <ToolCell>
                  <RectTool />
                </ToolCell>
              </ToolRow>
              <ToolRow>
                <ToolCell>
                  <Pencil />
                </ToolCell>
                <ToolCell>
                  <Brush />
                </ToolCell>
              </ToolRow>
              <ToolDivider />
              <ToolRow $top={1}>
                <ToolCell>
                  <InkBottle />
                </ToolCell>
                <ToolCell>
                  <Bucket />
                </ToolCell>
              </ToolRow>
              <ToolRow>
                <ToolCell>
                  <Dropper />
                </ToolCell>
                <ToolCell>
                  <Eraser />
                </ToolCell>
              </ToolRow>
              <ToolDivider />
              <ToolRow $top={3}>
                <ToolCell>
                  <Hand />
                </ToolCell>
                <ToolCell>
                  <Zoomer />
                </ToolCell>
              </ToolRow>
              <ColorRow $h={28} $top={3}>
                <Pencil size={13} />
                <Swatch />
              </ColorRow>
              <ColorRow $h={25} $top={1} $white>
                <Bucket size={15} />
                <Swatch />
              </ColorRow>
              <ToolRow $h={14} $top={1}>
                <SwapIcons />
              </ToolRow>
              <ToolRow $h={20} $top={5}>
                <ToolCell>
                  <MagnetBox>
                    <Magnet />
                  </MagnetBox>
                </ToolCell>
              </ToolRow>
              <ToolRow $h={20} $top={7}>
                <ToolCell>
                  <SmoothIcon />
                </ToolCell>
                <ToolCell>
                  <StraightenIcon />
                </ToolCell>
              </ToolRow>
            </ToolBody>
            <Highlight />
          </ToolPanel>

          <DocWindow>
            <DocTitle>
              <FlDoc />
              <DocTitleText>未命名-1*</DocTitleText>
              <WinButtons>
                <WinButton>
                  <Minimize />
                </WinButton>
                <WinButton>
                  <Maximize />
                </WinButton>
                <WinButton $close>
                  <CloseX />
                </WinButton>
              </WinButtons>
            </DocTitle>

            <Timeline>
              <RulerHead>
                <Grip $w={5} $h={16} />
                <HeadIcons>
                  <Eye />
                  <Lock />
                  <OutlineBox />
                </HeadIcons>
              </RulerHead>
              <Ruler>
                <RulerNum $w={30}>1</RulerNum>
                {RULER_MARKS.map((n) => (
                  <RulerNum key={n}>{n}</RulerNum>
                ))}
                <PlayHead />
                <RulerMenu>
                  <MenuLines />
                </RulerMenu>
              </Ruler>

              <LayerColumn>
                <LayerRow>
                  <LayerPage />
                  <LayerName>图层 1</LayerName>
                  <PencilWhite />
                  <LayerDot $left={12} />
                  <LayerDot $left={16} />
                  <LayerColor />
                </LayerRow>
              </LayerColumn>
              <FrameColumn>
                <FrameRow>
                  <KeyFrame />
                </FrameRow>
                <PlayLine />
              </FrameColumn>
              <VScroll>
                <ArrowCell>
                  <Tri dir="up" />
                </ArrowCell>
                <Thumb $h={75}>
                  <ThumbLinesH />
                </Thumb>
                <Spacer />
                <ArrowCell>
                  <Tri dir="down" />
                </ArrowCell>
              </VScroll>

              <FootLeft>
                <NewLayer />
                <MotionGuide />
                <Folder />
                <Trash />
                <Grip $w={7} $h={16} $left={83} />
              </FootLeft>
              <FootRight>
                <OnionMark />
                <OnionGroup>
                  <Onion />
                  <RowIcon $left={4}>
                    <Onion back="#fff" front="#fff" />
                  </RowIcon>
                  <RowIcon $left={9}>
                    <Onion back="#8d8dc8" />
                  </RowIcon>
                  <RowIcon $left={9}>
                    <FrameBrackets />
                  </RowIcon>
                </OnionGroup>
                <FootText $left={20}>1</FootText>
                <FootText $left={21}>12.0 fps</FootText>
                <FootText $left={25}>0.0s</FootText>
                <FootArrows>
                  <Tri dir="left" />
                  <Tri dir="right" />
                </FootArrows>
              </FootRight>
            </Timeline>

            <EditBar>
              <FilmTimeline />
              <EditSep $left={5} $right={10} />
              <BackArrow />
              <RowIcon $left={12}>
                <Clapper />
              </RowIcon>
              <SceneLabel>场景 1</SceneLabel>
              <EditSep $left={143} $right={8} />
              <WorkLabel>工作区</WorkLabel>
              <RowIcon $left={1}>
                <Tri dir="down" color="#555" />
              </RowIcon>
              <RowIcon $left={16}>
                <Clapper />
              </RowIcon>
              <SmallTri />
              <RowIcon $left={6}>
                <SymbolShapes />
              </RowIcon>
              <SmallTri />
              <Dropdown $w={98} $left={1}>
                100%
                <Tri dir="down" color="#111" />
              </Dropdown>
            </EditBar>

            <StageArea>
              <Stage />
              <VScroll $w={15}>
                <ArrowCell>
                  <Tri dir="up" />
                </ArrowCell>
                <Thumb $h={21} $top={88} $w={13}>
                  <ThumbLinesH />
                </Thumb>
                <Spacer />
                <ArrowCell>
                  <Tri dir="down" />
                </ArrowCell>
              </VScroll>
              <HScroll>
                <Tri dir="left" />
                <HThumb $w={100} $left={172}>
                  <ThumbLinesV />
                </HThumb>
                <Spacer />
                <Tri dir="right" />
              </HScroll>
              <CornerGrip>
                <ResizeDots />
              </CornerGrip>
            </StageArea>
          </DocWindow>

          <SidePanel>
            <PanelStrip $h={19} $justify="space-between">
              <Grip $w={6} $h={12} />
              <span>▶▶</span>
            </PanelStrip>

            <PanelBox>
              <TabBand>
                <Tab $w={46} $active>
                  颜色 <MiniX />
                </Tab>
                <Tab $w={36}>样本</Tab>
                <PanelActions>
                  <MiniMin />
                  <MiniX />
                </PanelActions>
                <PanelMenu>
                  <MenuLines />
                </PanelMenu>
              </TabBand>
            </PanelBox>

            <PanelBox $grow $top={2}>
              <TabBand>
                <Tab $w={34} $active>
                  库 <MiniX />
                </Tab>
                <PanelActions>
                  <MiniDash />
                  <MiniX />
                </PanelActions>
                <PanelMenu>
                  <MenuLines />
                </PanelMenu>
              </TabBand>
              <LibraryRow>
                <LibrarySelect>
                  未命名-1
                  <Tri dir="down" color="#111" />
                </LibrarySelect>
                <RowIcon $left={8}>
                  <PinIcon />
                </RowIcon>
                <RowIcon $left={10}>
                  <NewLibrary />
                </RowIcon>
              </LibraryRow>
              <PreviewTitle>空的库</PreviewTitle>
              <PreviewArea />
              <ListHead>
                <ColName>名称</ColName>
                <ColType>类型</ColType>
                <SideButton $h={19}>
                  <SortIcon />
                </SideButton>
              </ListHead>
              <ListBody>
                <ListArea />
                <SideColumn>
                  <SideButton>
                    <WideBox />
                  </SideButton>
                  <SideButton>
                    <NarrowBox />
                  </SideButton>
                  <ArrowCell $h={14}>
                    <Tri dir="up" />
                  </ArrowCell>
                  <Thumb $h={15} $w={14}>
                    <ThumbLinesH />
                  </Thumb>
                  <Spacer />
                  <ArrowCell $h={14}>
                    <Tri dir="down" />
                  </ArrowCell>
                </SideColumn>
              </ListBody>
              <ListFoot>
                <NewLayer />
                <RowIcon $left={6}>
                  <Folder />
                </RowIcon>
                <RowIcon $left={3}>
                  <InfoDot />
                </RowIcon>
                <RowIcon $left={23}>
                  <Trash color="#999" />
                </RowIcon>
                <RowIcon $left={5}>
                  <Tri dir="left" />
                </RowIcon>
                <HThumb $w={27} $h={14} $left={6}>
                  <ThumbLinesV />
                </HThumb>
                <RowIcon $left={54}>
                  <Tri dir="right" />
                </RowIcon>
                <RowIcon $left={12}>
                  <ResizeDots />
                </RowIcon>
              </ListFoot>
            </PanelBox>

            <Watermark>
              <WmLine $h={48}>
                <WmBai>Bai</WmBai>
                <PawMark />
                <WmCn>经验</WmCn>
              </WmLine>
              <WmLine $h={28}>
                <WmUrl>jingyan.baidu.com</WmUrl>
              </WmLine>
            </Watermark>
          </SidePanel>
        </Workspace>
      </AppFrame>
    </>
  );
};

export default App;
